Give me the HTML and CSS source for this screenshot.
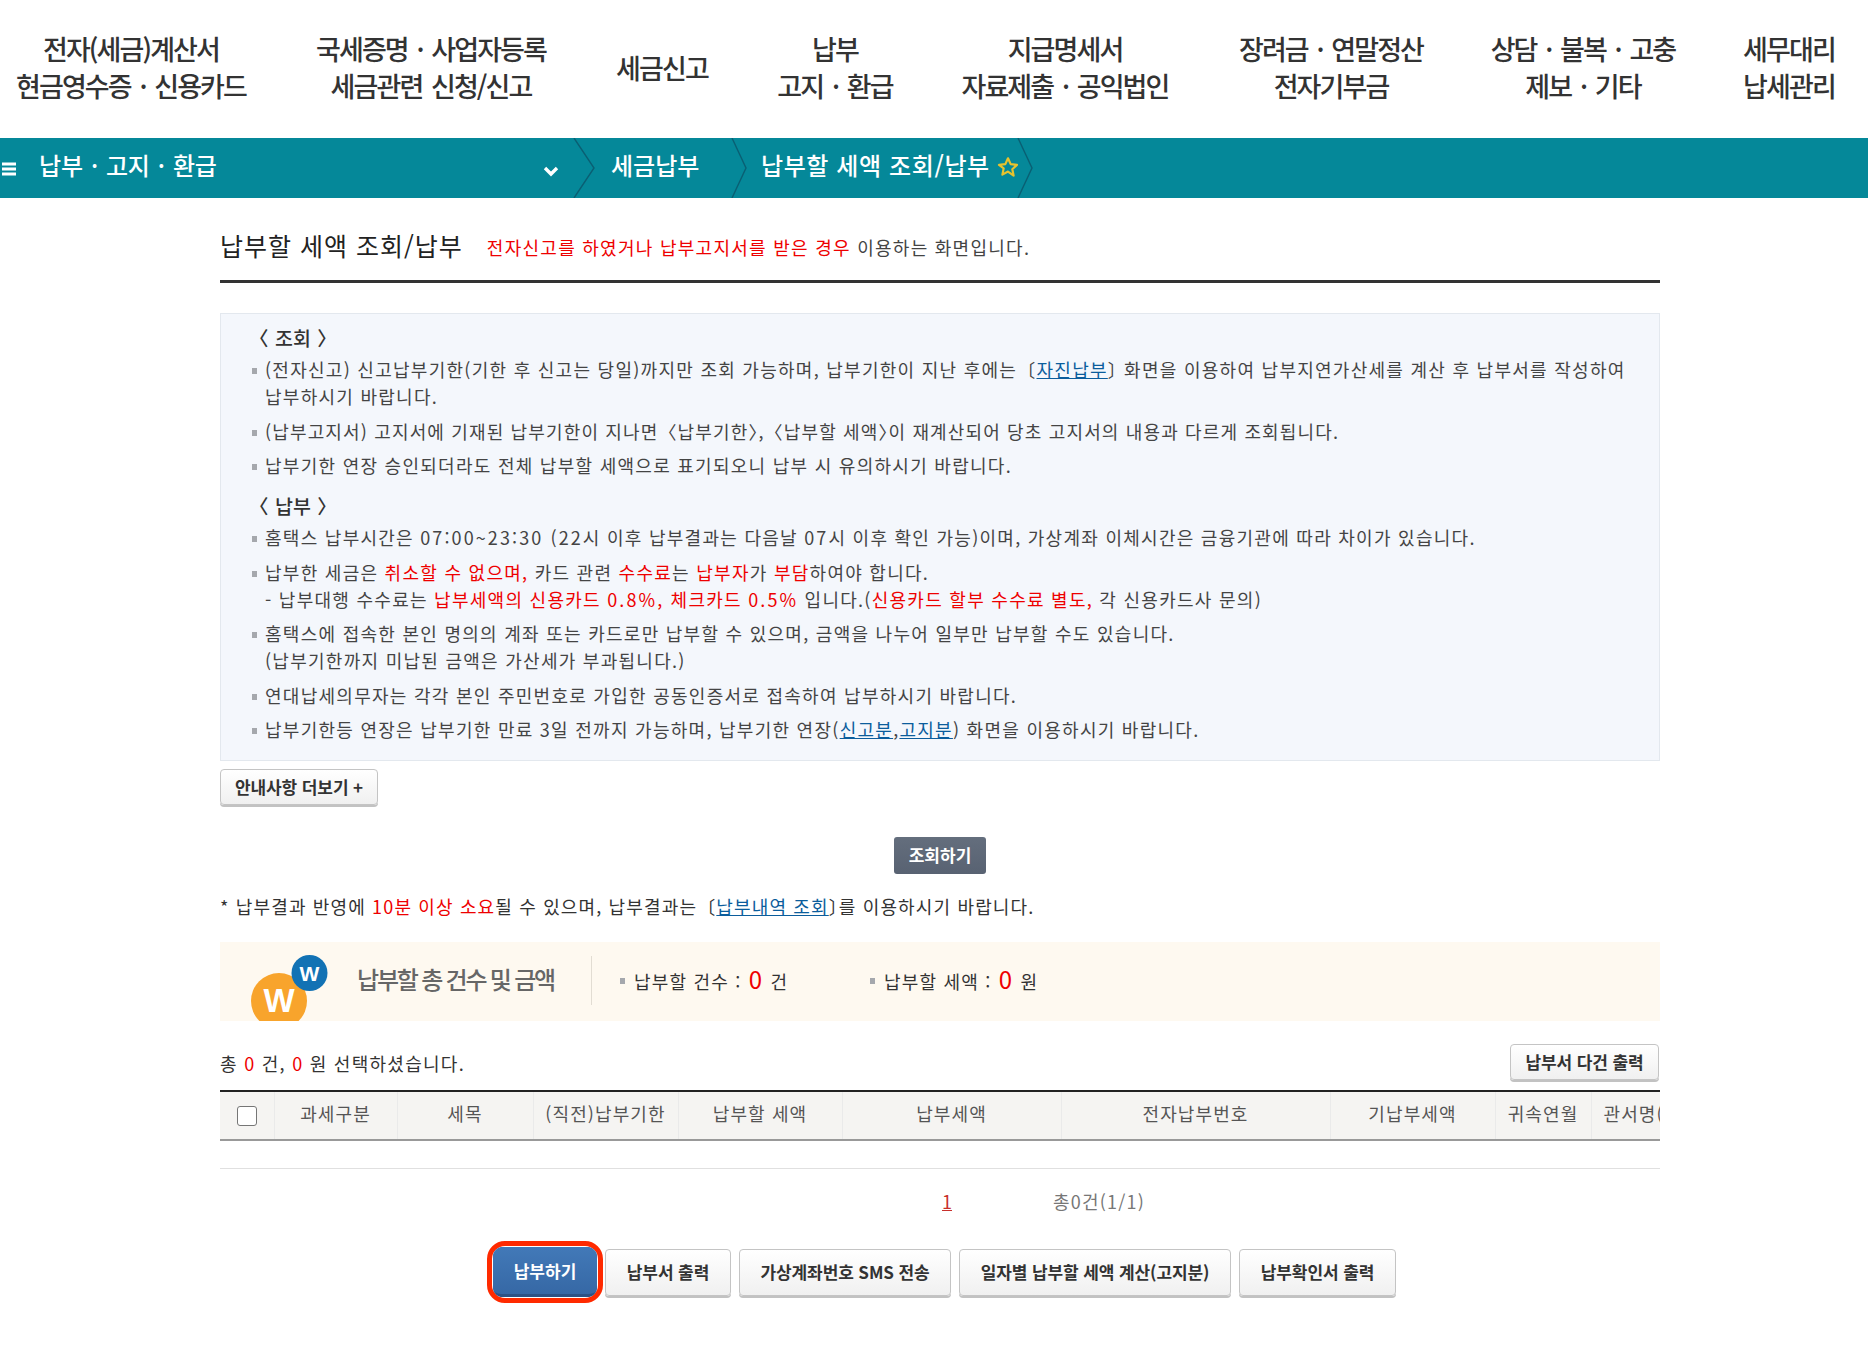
FILE: index.html
```html
<!DOCTYPE html>
<html lang="ko">
<head>
<meta charset="utf-8">
<title>납부할 세액 조회/납부</title>
<link rel="stylesheet" href="styles.css">
</head>
<body>
<nav class="gnb">
  <a class="gnb-item gnb-tight">전자(세금)계산서<br>현금영수증 · 신용카드</a>
  <a class="gnb-item">국세증명 · 사업자등록<br>세금관련 신청/신고</a>
  <a class="gnb-item">세금신고</a>
  <a class="gnb-item">납부<br>고지 · 환급</a>
  <a class="gnb-item">지급명세서<br>자료제출 · 공익법인</a>
  <a class="gnb-item">장려금 · 연말정산<br>전자기부금</a>
  <a class="gnb-item">상담 · 불복 · 고충<br>제보 · 기타</a>
  <a class="gnb-item gnb-last">세무대리<br>납세관리</a>
</nav>
<div class="crumbs">
  <div class="crumb-main">
    <svg class="burger" width="14" height="14" viewBox="0 0 14 14"><path d="M0 2h14M0 7h14M0 12h14" stroke="#fff" stroke-width="3"/></svg>
    <span class="crumb-root">납부 · 고지 · 환급</span>
    <svg class="chev" width="16" height="11" viewBox="0 0 16 11"><path d="M2 2l6 6 6-6" fill="none" stroke="#fff" stroke-width="3.400"/></svg>
  </div>
  <svg class="sep" width="23" height="60" viewBox="0 0 23 60"><path d="M1 0l20 30L1 60" fill="none" stroke="#0a5f73" stroke-width="1.4"/></svg>
  <span class="crumb-mid">세금납부</span>
  <svg class="sep" width="16" height="60" viewBox="0 0 16 60"><path d="M1 0l14 30L1 60" fill="none" stroke="#0a5f73" stroke-width="1.4"/></svg>
  <span class="crumb-cur">납부할 세액 조회/납부</span>
  <svg class="star" width="22" height="22" viewBox="0 0 24 24"><path d="M12 2.5l2.9 6.4 6.9.8-5.1 4.7 1.4 6.9L12 17l-6.100 3.300 1.400-6.900L2.200 9.700l6.900-.8z" fill="none" stroke="#e8c22e" stroke-width="2.4" stroke-linejoin="round"/></svg>
  <svg class="sep" width="16" height="60" viewBox="0 0 16 60"><path d="M1 0l14 30L1 60" fill="none" stroke="#0a5f73" stroke-width="1.4"/></svg>
</div>
<main class="main">
  <header class="title-row">
    <h1 class="title">납부할 세액 조회/납부</h1>
    <p class="title-desc"><span class="red">전자신고를 하였거나 납부고지서를 받은 경우</span> 이용하는 화면입니다.</p>
  </header>
  <section class="notice">
    <h2 class="notice-head">〈 조회 〉</h2>
    <ul class="notice-list">
      <li>(전자신고) 신고납부기한(기한 후 신고는 당일)까지만 조회 가능하며, 납부기한이 지난 후에는〔<a class="link">자진납부</a><span class="close">〕</span> 화면을 이용하여 납부지연가산세를 계산 후 납부서를 작성하여<br>납부하시기 바랍니다.</li>
      <li class="tight">(납부고지서) 고지서에 기재된 납부기한이 지나면〈납부기한<span class="close">〉</span>,〈납부할 세액<span class="close">〉</span>이 재계산되어 당초 고지서의 내용과 다르게 조회됩니다.</li>
      <li>납부기한 연장 승인되더라도 전체 납부할 세액으로 표기되오니 납부 시 유의하시기 바랍니다.</li>
    </ul>
    <h2 class="notice-head notice-head-next">〈 납부 〉</h2>
    <ul class="notice-list">
      <li>홈택스 납부시간은 <span class="wide">07:00~23:30 (22</span>시 이후 납부결과는 다음날 <span class="wide">07</span>시 이후 확인 가능)이며, 가상계좌 이체시간은 금융기관에 따라 차이가 있습니다.</li>
      <li>납부한 세금은 <span class="red">취소할 수 없으며,</span> 카드 관련 <span class="red">수수료</span>는 <span class="red">납부자</span>가 <span class="red">부담</span>하여야 합니다.<br>- 납부대행 수수료는 <span class="red">납부세액의 신용카드 <span class="wide">0.8%,</span> 체크카드 <span class="wide">0.5%</span></span> 입니다.(<span class="red">신용카드 할부 수수료 별도,</span> 각 신용카드사 문의)</li>
      <li>홈택스에 접속한 본인 명의의 계좌 또는 카드로만 납부할 수 있으며, 금액을 나누어 일부만 납부할 수도 있습니다.<br>(납부기한까지 미납된 금액은 가산세가 부과됩니다.)</li>
      <li>연대납세의무자는 각각 본인 주민번호로 가입한 공동인증서로 접속하여 납부하시기 바랍니다.</li>
      <li>납부기한등 연장은 납부기한 만료 3일 전까지 가능하며, 납부기한 연장(<a class="link">신고분</a>,<a class="link">고지분</a>) 화면을 이용하시기 바랍니다.</li>
    </ul>
  </section>
  <button class="btn btn-more">안내사항 더보기 +</button>
  <div class="search-row"><button class="btn-search">조회하기</button></div>
  <p class="result-note">* 납부결과 반영에 <span class="red">10분 이상 소요</span>될 수 있으며, 납부결과는〔<a class="link">납부내역 조회</a><span class="close">〕</span>를 이용하시기 바랍니다.</p>
  <section class="summary">
    <svg class="summary-logo" width="92" height="79" viewBox="0 0 92 79">
      <circle cx="37" cy="59" r="28" fill="#f8a42c"/>
      <circle cx="67.500" cy="31" r="18" fill="#1272b4"/>
      <text x="37" y="70" class="logo-big">W</text>
      <text x="67.500" y="38.500" class="logo-small">W</text>
    </svg>
    <h2 class="summary-title">납부할 총 건수 및 금액</h2>
    <div class="summary-stats">
      <p class="stat stat-count">납부할 건수 : <b class="num">0</b> 건</p>
      <p class="stat stat-amount">납부할 세액 : <b class="num">0</b> 원</p>
    </div>
  </section>
  <div class="select-row">
    <p class="select-text">총 <span class="red">0</span> 건, <span class="red">0</span> 원 선택하셨습니다.</p>
    <button class="btn btn-multi">납부서 다건 출력</button>
  </div>
  <div class="grid-wrap">
    <table class="grid">
      <thead>
        <tr>
          <th class="c-check"><input class="check" type="checkbox"></th>
          <th class="c-a">과세구분</th>
          <th class="c-b">세목</th>
          <th class="c-c">(직전)납부기한</th>
          <th class="c-d">납부할 세액</th>
          <th class="c-e">납부세액</th>
          <th class="c-f">전자납부번호</th>
          <th class="c-g">기납부세액</th>
          <th class="c-h">귀속연월</th>
          <th class="c-i">관서명(</th>
        </tr>
      </thead>
    </table>
  </div>
  <div class="pager"><a class="page-now">1</a><span class="page-total">총0건(1/1)</span></div>
  <div class="actions">
    <span class="pay-ring"><button class="btn-pay">납부하기</button></span>
    <button class="btn btn-act b1">납부서 출력</button>
    <button class="btn btn-act b2">가상계좌번호 SMS 전송</button>
    <button class="btn btn-act b3">일자별 납부할 세액 계산(고지분)</button>
    <button class="btn btn-act b4">납부확인서 출력</button>
  </div>
</main>
</body>
</html>
```
FILE: styles.css
```css
* { box-sizing: border-box; }
html, body { margin: 0; padding: 0; }
body {
  width: 1868px;
  height: 1356px;
  overflow: hidden;
  background: #fff;
  color: #333;
  font-family: "Noto Sans CJK KR", "Noto Sans", sans-serif;
  font-size: 18px;
}
p, h1, h2, ul { margin: 0; padding: 0; }
.red { color: #ee0000; }
.link { color: #0b5d9c; text-decoration: underline; }
.close { letter-spacing: -8px; }
.wide { letter-spacing: 2.1px; }

.gnb {
  display: grid;
  grid-template-columns: 262px 338px 124px 222px 238px 294px 210px 180px;
  height: 138px;
  align-items: center;
  padding-bottom: 4px;
}
.gnb-item {
  display: block;
  text-align: center;
  font-size: 27px;
  font-weight: 500;
  line-height: 37px;
  letter-spacing: -1.9px;
  word-spacing: 3px;
  color: #333;
  white-space: nowrap;
}
.gnb-last { padding-left: 22px; }

.crumbs {
  display: flex;
  align-items: center;
  height: 60px;
  background: #058899;
  color: #fff;
}
.crumb-main {
  display: flex;
  align-items: center;
  width: 573px;
  padding-left: 2px;
}
.burger { flex: none; margin-top: 2px; }
.crumb-root {
  margin-left: 23px;
  padding-bottom: 8px;
  font-size: 24px;
  font-weight: 500;
  letter-spacing: -0.2px;
  word-spacing: 1.6px;
  white-space: nowrap;
}
.chev { margin-left: auto; margin-right: 14px; margin-top: 6px; }
.sep { flex: none; display: block; }
.crumb-mid {
  width: 135px;
  padding-left: 15px;
  padding-bottom: 8px;
  font-size: 24px;
  font-weight: 500;
  letter-spacing: 0;
}
.crumb-cur {
  padding-left: 14px;
  padding-bottom: 8px;
  font-size: 24px;
  font-weight: 500;
  letter-spacing: 0.6px;
  white-space: nowrap;
}
.star { margin-left: 7px; margin-right: -2px; margin-bottom: 2px; flex: none; }

.main { width: 1440px; margin-left: 220px; }
.title-row {
  display: flex;
  align-items: center;
  height: 85px;
  padding-top: 11px;
  border-bottom: 3px solid #333;
}
.title {
  font-size: 25px;
  font-weight: 400;
  color: #222;
  letter-spacing: 1px;
  white-space: nowrap;
}
.title-desc { margin-left: 24px; padding-top: 5px; font-size: 18px; letter-spacing: 1.270px; color: #444; white-space: nowrap; }

.notice {
  margin-top: 30px;
  height: 448px;
  padding-top: 10px;
  background: #f4f7fc;
  border: 1px solid #e3e8ee;
  line-height: 27px;
  font-size: 18px;
  letter-spacing: 1.270px;
  color: #444;
}
.notice-head {
  padding-left: 28px;
  font-size: 19.500px;
  font-weight: 500;
  line-height: 27px;
  letter-spacing: 0;
  word-spacing: 1px;
  color: #333;
}
.notice-head-next { margin-top: 13px; }
.notice-list { list-style: none; }
.notice-list li {
  padding-left: 44px;
  margin-top: 7.500px;
  white-space: nowrap;
  background: linear-gradient(#a5a8ad, #a5a8ad) no-repeat 31px 12px / 5px 6px;
}
.notice-list li:first-child { margin-top: 5px; }
.notice-list li.tight { letter-spacing: 1.150px; }

.btn {
  border: 1px solid #c4c4c4;
  border-radius: 4px;
  background: linear-gradient(#fff, #f0f0f0);
  box-shadow: 0 2px 0 #c2c2c2;
  font-family: inherit;
  font-weight: 700;
  font-size: 17px;
  letter-spacing: -0.1px;
  color: #333;
  padding: 0 0 2px;
  white-space: nowrap;
}
.btn-more { display: block; margin-top: 8px; width: 158px; height: 36px; }
.search-row { display: flex; justify-content: center; margin-top: 32px; }
.btn-search {
  width: 92px;
  height: 37px;
  padding: 0 0 2px;
  border: 0;
  border-radius: 3px;
  background: linear-gradient(#646e7d, #586272);
  color: #fff;
  font-family: inherit;
  font-weight: 700;
  font-size: 17px;
}
.result-note { margin-top: 18.500px; line-height: 27px; font-size: 18px; letter-spacing: 1.150px; color: #333; white-space: nowrap; }

.summary {
  display: flex;
  margin-top: 22.500px;
  height: 79px;
  background: #fef9f0;
  overflow: hidden;
}
.summary-logo { flex: none; margin-left: 22px; display: block; }
.logo-big { font-family: "Liberation Sans", sans-serif; font-weight: 700; font-size: 33px; fill: #fff; text-anchor: middle; }
.logo-small { font-family: "Liberation Sans", sans-serif; font-weight: 700; font-size: 21px; fill: #fff; text-anchor: middle; }
.summary-title {
  width: 235px;
  margin-left: 23px;
  margin-top: 14px;
  padding-top: 8px;
  height: 49px;
  border-right: 1px solid #e2ddd3;
  font-size: 24px;
  font-weight: 500;
  letter-spacing: -2.200px;
  word-spacing: 0;
  color: #666;
  white-space: nowrap;
  line-height: 30px;
}
.summary-stats { display: flex; align-items: center; padding-bottom: 4px; }
.stat {
  padding-left: 14px;
  font-size: 18px;
  letter-spacing: 1.200px;
  color: #333;
  white-space: nowrap;
  background: linear-gradient(#a5a8ad, #a5a8ad) no-repeat 0 15px / 5px 6px;
  line-height: 32px;
}
.stat-count { width: 250px; margin-left: 28px; }
.num { font-weight: 400; font-size: 24px; color: #ee0000; margin: 0 1px; }

.select-row {
  display: flex;
  justify-content: space-between;
  align-items: center;
  margin-top: 23px;
  padding-right: 1px;
}
.select-text { font-size: 18px; letter-spacing: 1.270px; color: #333; }
.btn-multi { width: 149px; height: 36px; margin-bottom: 2px; }

.grid-wrap { margin-top: 8px; width: 1440px; overflow: hidden; }
.grid {
  width: 1440px;
  table-layout: fixed;
  border-collapse: collapse;
  border-top: 2px solid #222;
  border-bottom: 2px solid #999;
}
.grid th {
  height: 49px;
  padding: 0 0 5px;
  background: #f5f4f2;
  border-left: 1px solid #eaeaea;
  font-size: 18px;
  font-weight: 400;
  letter-spacing: 1.100px;
  color: #555;
  white-space: nowrap;
  overflow: hidden;
}
.grid th:first-child { border-left: 0; padding: 0; }
.c-check { width: 54px; }
.c-a { width: 123px; }
.c-b { width: 136px; }
.c-c { width: 145px; }
.c-d { width: 164px; }
.c-e { width: 219px; }
.c-f { width: 269px; }
.c-g { width: 165px; }
.c-h { width: 96px; }
.c-i { width: 69px; }
.grid th.c-i { text-align: left; padding-left: 12px; }
.check {
  appearance: none;
  display: block;
  width: 20px;
  height: 20px;
  margin: 0 0 0 17px;
  background: #fff;
  border: 1px solid #767676;
  border-radius: 3px;
}

.pager {
  display: flex;
  align-items: center;
  height: 65px;
  margin-top: 27px;
  border-top: 1px solid #e0e0e0;
  font-size: 18px;
}
.page-now { margin-left: 722px; color: #c8302c; text-decoration: underline; }
.page-total { margin-left: 101px; letter-spacing: 1.200px; color: #777; }

.actions {
  display: flex;
  align-items: center;
  gap: 8px;
  margin-top: 8px;
  padding-left: 267px;
}
.pay-ring {
  display: block;
  margin-right: -6px;
  padding: 1px;
  height: 62px;
  width: 116px;
  border: 5px solid #ff2a00;
  border-radius: 18px;
  overflow: hidden;
}
.btn-pay {
  display: block;
  width: 100%;
  height: 100%;
  padding: 0;
  border: 0;
  border-bottom: 3px solid #2c5285;
  border-radius: 8px;
  background: linear-gradient(#4279b8, #3668a5);
  color: #fff;
  font-family: inherit;
  font-weight: 700;
  font-size: 17px;
}
.btn-act { height: 47px; font-size: 17px; }
.b1 { width: 126px; }
.b2 { width: 212px; }
.b3 { width: 272px; }
.b4 { width: 157px; }
```
